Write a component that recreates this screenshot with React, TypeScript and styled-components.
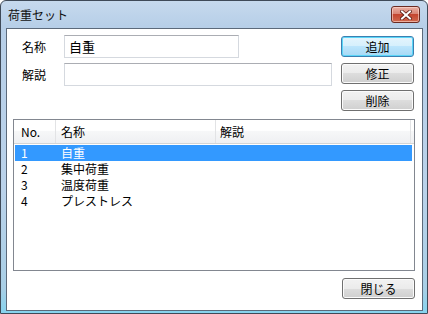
import React from "react";
import styled, { createGlobalStyle } from "styled-components";

const GlobalStyle = createGlobalStyle`
  html, body {
    margin: 0;
    padding: 0;
    background: #ffffff;
  }
  body {
    font-family: "Noto Sans CJK JP", "Noto Sans", sans-serif;
    font-size: 12px;
    color: #000;
  }
  * { box-sizing: border-box; }
`;

const Window = styled.div`
  width: 428px;
  height: 314px;
  border: 1px solid #3f4a58;
  border-radius: 6px 6px 0 0;
  background: linear-gradient(to bottom, #c6d9ed 0%, #b7cfe8 25px, #bad2ea 60%, #a9cfe6 92%, #86d3ee 100%);
  display: flex;
  flex-direction: column;
`;

const TitleBar = styled.div`
  height: 27px;
  display: flex;
  justify-content: space-between;
  align-items: flex-start;
  padding: 0 7px 0 7px;
`;

const TitleText = styled.span`
  font-size: 12px;
  line-height: 14px;
  margin-top: 7px;
  color: #111;
`;

const CloseButton = styled.div`
  width: 29px;
  height: 17px;
  margin-top: 5px;
  border: 1px solid #6b2b22;
  border-radius: 3px;
  background: linear-gradient(to bottom, #eab0a4 0%, #d98575 45%, #c4452f 50%, #d0694f 100%);
  box-shadow: inset 0 0 0 1px rgba(255, 220, 210, 0.6);
  display: flex;
  align-items: center;
  justify-content: center;
`;

const Client = styled.div`
  flex: 1;
  margin: 0 4px 2px 5px;
  border: 1px solid #5c6a7b;
  background: #ffffff;
  display: flex;
  flex-direction: column;
`;

const TopSection = styled.div`
  display: flex;
  align-items: flex-start;
  padding: 6px 0 0 15px;
`;

const Form = styled.div`
  display: flex;
  flex-direction: column;
  gap: 5px;
`;

const FieldRow = styled.div`
  display: flex;
  align-items: center;
  height: 23px;
`;

const Label = styled.span`
  width: 42px;
  line-height: 14px;
`;

const TextBox = styled.div<{ $width: number }>`
  width: ${(p) => p.$width}px;
  height: 23px;
  border: 1px solid #d5d9df;
  border-top-color: #abadb3;
  padding: 0 4px;
  display: flex;
  align-items: center;
  line-height: 14px;
  font-size: 13px;
`;

const ButtonColumn = styled.div`
  margin-left: 9px;
  padding-top: 1px;
  display: flex;
  flex-direction: column;
  gap: 6px;
`;

const Button = styled.div<{ $focused?: boolean }>`
  width: 73px;
  height: 21px;
  border: 1px solid ${(p) => (p.$focused ? "#3c7fb1" : "#707070")};
  border-radius: 3px;
  background: ${(p) =>
    p.$focused
      ? "linear-gradient(to bottom, #e5f5fd 0%, #d5effc 50%, #bce5fc 50%, #a7d9f5 100%)"
      : "linear-gradient(to bottom, #f2f2f2 0%, #ebebeb 50%, #dddddd 50%, #cfcfcf 100%)"};
  box-shadow: inset 0 0 0 1px ${(p) => (p.$focused ? "#5ad6f8" : "#fbfbfb")};
  display: flex;
  align-items: center;
  justify-content: center;
  line-height: 14px;
`;

const ListView = styled.div`
  height: 152px;
  margin: 8px 7px 0 6px;
  border: 1px solid #828790;
  display: flex;
  flex-direction: column;
`;

const Header = styled.div`
  height: 24px;
  display: flex;
  border-bottom: 1px solid #d5d5d5;
  background: linear-gradient(to bottom, #ffffff 0%, #ffffff 45%, #f6f7f8 50%, #eff0f2 100%);
`;

const HeaderCell = styled.div<{ $width: number; $pad: number }>`
  width: ${(p) => p.$width}px;
  padding-left: ${(p) => p.$pad}px;
  border-right: 1px solid #e2e3e5;
  display: flex;
  align-items: center;
  line-height: 14px;
`;

const Rows = styled.div`
  padding: 1px 2px 0 1px;
  display: flex;
  flex-direction: column;
`;

const Row = styled.div<{ $selected?: boolean }>`
  height: 16px;
  display: flex;
  align-items: center;
  background: ${(p) => (p.$selected ? "#3399ff" : "transparent")};
  color: ${(p) => (p.$selected ? "#ffffff" : "#000000")};
`;

const Cell = styled.div<{ $width: number; $pad: number }>`
  width: ${(p) => p.$width}px;
  padding-left: ${(p) => p.$pad}px;
  line-height: 14px;
  white-space: nowrap;
`;

const Footer = styled.div`
  display: flex;
  justify-content: flex-end;
  padding: 7px 7px 0 0;
`;

const loads = [
  { no: 1, name: "自重" },
  { no: 2, name: "集中荷重" },
  { no: 3, name: "温度荷重" },
  { no: 4, name: "プレストレス" },
];

const App = () => {
  return (
    <>
      <GlobalStyle />
      <Window>
        <TitleBar>
          <TitleText>荷重セット</TitleText>
          <CloseButton>
            <svg width="12" height="10" viewBox="0 0 12 10">
              <path d="M2 1.5 L10 8.5 M10 1.5 L2 8.5" stroke="#5a1a12" strokeWidth="3.6" strokeLinecap="square" />
              <path d="M2 1.5 L10 8.5 M10 1.5 L2 8.5" stroke="#ffffff" strokeWidth="2" strokeLinecap="square" />
            </svg>
          </CloseButton>
        </TitleBar>
        <Client>
          <TopSection>
            <Form>
              <FieldRow>
                <Label>名称</Label>
                <TextBox $width={175}>自重</TextBox>
              </FieldRow>
              <FieldRow>
                <Label>解説</Label>
                <TextBox $width={268} />
              </FieldRow>
            </Form>
            <ButtonColumn>
              <Button $focused>追加</Button>
              <Button>修正</Button>
              <Button>削除</Button>
            </ButtonColumn>
          </TopSection>
          <ListView>
            <Header>
              <HeaderCell $width={42} $pad={7}>No.</HeaderCell>
              <HeaderCell $width={160} $pad={5}>名称</HeaderCell>
              <HeaderCell $width={195} $pad={4}>解説</HeaderCell>
            </Header>
            <Rows>
              {loads.map((l) => (
                <Row key={l.no} $selected={l.no === 1}>
                  <Cell $width={41} $pad={6}>{l.no}</Cell>
                  <Cell $width={160} $pad={5}>{l.name}</Cell>
                  <Cell $width={195} $pad={4} />
                </Row>
              ))}
            </Rows>
          </ListView>
          <Footer>
            <Button>閉じる</Button>
          </Footer>
        </Client>
      </Window>
    </>
  );
};

export default App;
